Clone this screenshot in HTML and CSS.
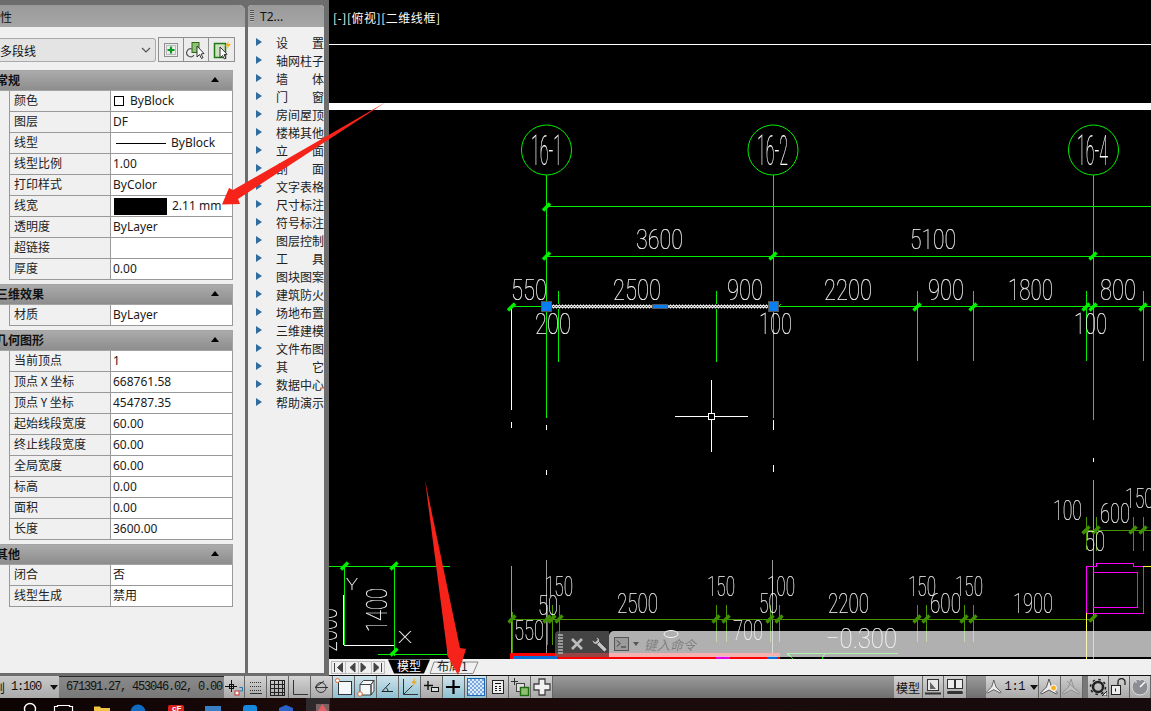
FILE: index.html
```html
<!DOCTYPE html>
<html lang="zh">
<head>
<meta charset="utf-8">
<title>CAD</title>
<link rel="stylesheet" href="styles.css">
</head>
<body>
<div class="main">
  <section class="props">
    <div class="titlebar props-title"><span class="clip-title">特性</span></div>
    <div class="selector">
      <div class="combo"><span>多段线</span>
        <svg class="chev" width="10" height="6" viewBox="0 0 10 6"><path d="M1 1l4 4 4-4" fill="none" stroke="#555" stroke-width="1.2"/></svg>
      </div>
      <div class="combo-btns">
        <button class="tool"><svg width="18" height="18" viewBox="0 0 18 18"><rect x="2.5" y="2.5" width="13" height="13" fill="none" stroke="#333" stroke-dasharray="1 1"/><rect x="4.5" y="4.5" width="9" height="9" fill="none" stroke="#888" stroke-dasharray="1 1"/><path d="M9 5.5v7M5.500 9h7" stroke="#0a9a20" stroke-width="2.2"/></svg></button>
        <button class="tool"><svg width="20" height="20" viewBox="0 0 20 20"><rect x="6" y="2.500" width="7" height="10" fill="#8fc17a" stroke="#2d6b12"/><path d="M6 9a4 4 0 1 0 2 6" fill="none" stroke="#555" stroke-width="1.200"/><path d="M11 6v11l2.500-2.500 2 4 1.500-.8-2-3.700 3-.5z" fill="#fff" stroke="#333"/></svg></button>
        <button class="tool"><svg width="20" height="20" viewBox="0 0 20 20"><rect x="2.500" y="3.500" width="11" height="14" fill="#cfe0c4" stroke="#1f7a14" stroke-width="1.500"/><path d="M8 7v11l2.500-2.500 2 3.500 1.500-.8-2-3.500 3-.5z" fill="#fff" stroke="#333"/><path d="M17 1l-4 5h3l-2 4 5-6h-3z" fill="#f5b21e"/></svg></button>
      </div>
    </div>

    <div class="sec">
      <h3 class="sec-head"><span>常规</span><i class="caret"></i></h3>
      <div class="row"><div class="k">颜色</div><div class="v"><i class="swatch"></i>ByBlock</div></div>
      <div class="row"><div class="k">图层</div><div class="v">DF</div></div>
      <div class="row"><div class="k">线型</div><div class="v"><i class="ltype"></i>ByBlock</div></div>
      <div class="row"><div class="k">线型比例</div><div class="v">1.00</div></div>
      <div class="row"><div class="k">打印样式</div><div class="v">ByColor</div></div>
      <div class="row"><div class="k">线宽</div><div class="v"><i class="lweight"></i>2.11 mm</div></div>
      <div class="row"><div class="k">透明度</div><div class="v">ByLayer</div></div>
      <div class="row"><div class="k">超链接</div><div class="v"></div></div>
      <div class="row"><div class="k">厚度</div><div class="v">0.00</div></div>
    </div>
    <div class="sec">
      <h3 class="sec-head"><span>三维效果</span><i class="caret"></i></h3>
      <div class="row"><div class="k">材质</div><div class="v">ByLayer</div></div>
    </div>
    <div class="sec">
      <h3 class="sec-head"><span>几何图形</span><i class="caret"></i></h3>
      <div class="row"><div class="k">当前顶点</div><div class="v">1</div></div>
      <div class="row"><div class="k">顶点 X 坐标</div><div class="v">668761.58</div></div>
      <div class="row"><div class="k">顶点 Y 坐标</div><div class="v">454787.35</div></div>
      <div class="row"><div class="k">起始线段宽度</div><div class="v">60.00</div></div>
      <div class="row"><div class="k">终止线段宽度</div><div class="v">60.00</div></div>
      <div class="row"><div class="k">全局宽度</div><div class="v">60.00</div></div>
      <div class="row"><div class="k">标高</div><div class="v">0.00</div></div>
      <div class="row"><div class="k">面积</div><div class="v">0.00</div></div>
      <div class="row"><div class="k">长度</div><div class="v">3600.00</div></div>
    </div>
    <div class="sec">
      <h3 class="sec-head"><span>其他</span><i class="caret"></i></h3>
      <div class="row"><div class="k">闭合</div><div class="v">否</div></div>
      <div class="row"><div class="k">线型生成</div><div class="v">禁用</div></div>
    </div>
  </section>

  <section class="palette">
    <div class="titlebar pal-title"><i class="grip"></i><span>T2...</span></div>
    <ul class="pal-list">
      <li>设　　置</li><li>轴网柱子</li><li>墙　　体</li><li>门　　窗</li><li>房间屋顶</li><li>楼梯其他</li><li>立　　面</li>
      <li>剖　　面</li><li>文字表格</li><li>尺寸标注</li><li>符号标注</li><li>图层控制</li><li>工　　具</li><li>图块图案</li>
      <li>建筑防火</li><li>场地布置</li><li>三维建模</li><li>文件布图</li><li>其　　它</li><li>数据中心</li><li>帮助演示</li>
    </ul>
  </section>

  <section class="viewport">
    <svg class="cad" width="822" height="659" viewBox="329 0 822 659">
      <defs>
        <path id="tk" d="M-3.500 3.500L3.500-3.500"/>
        <pattern id="zz" width="3" height="5" patternUnits="userSpaceOnUse" x="552" y="304"><path d="M0 2.500L1.500 1L3 2.500L1.500 4z" fill="none" stroke="#fff" stroke-width="1.200"/></pattern>
      </defs>
      <g class="label-wrap"><text class="vp-label" x="333" y="23" textLength="107">[-][俯视][二维线框]</text></g>
      <g class="crisp">
        <path class="wl" d="M329 44.500H1151"/>
        <rect x="329" y="103" width="822" height="7" fill="#fff"/>
        <path class="gl" d="M546.500 175V418M773.500 175V418M1093.500 175V420M546 206.500H1151M546 256.500H1151M510 306.500H1151M558.500 291V362M716.500 291V362M917.500 291V361M973.500 291V361M1086.500 291V361M1143.500 291V361"/>
        <path class="wl" d="M511.500 306V410M511.500 422V428M546.500 425V430M546.500 470V475M773.500 420V430M773.500 465V472M1093.500 458V462"/>
        <path class="grey" d="M511.500 566V659M546.500 560V659M772.500 560V659M1093.500 480V659"/>
        <path class="dg" d="M512 619.500H1093M512.500 612V655M547.500 605V645M552.500 605V645M559.500 605V645M716.500 605V642M726.500 605V642M770.500 605V642M779.500 605V642M917.500 605V642M926.500 605V642M964.500 605V642M973.500 605V642M1083 530.500H1151M1086.500 517V550M1096.500 517V551M1133.500 517V551M1143.500 517V551"/>
        <path class="mg" d="M1086.500 613V566.500H1096.500V563.500H1133.500V566.500H1143.500V613H1086.500M1093 572.500H1137.500V607.500H1093"/>
        <path class="yl" d="M1086.500 613V659M1143 566.500H1151"/>
        <path class="gl" d="M329 566.500H450M344.500 566V645M394.500 566V656M378 654.500H450"/>
        <path class="wl" d="M343.500 595V645M344 645.500H394"/>
        <path class="wl" d="M675 416.500H748M711.500 380V452"/>
        <rect x="708.500" y="413.500" width="6" height="6" fill="#000" stroke="#fff"/>
        <rect x="510" y="653" width="270" height="6" fill="#f00"/>
        <rect x="513" y="656" width="44" height="3" fill="#0a6ed8"/>
        <rect x="716" y="656" width="14" height="3" fill="#e000e0"/>
        <rect x="767" y="656" width="10" height="3" fill="#0a6ed8"/>
        <path class="gl" d="M787 653.500H898M787 653.500L793 659M822 659L825 653.500"/>
      </g>
      <circle class="cg" cx="546.500" cy="150" r="25"/>
      <circle class="cg" cx="773" cy="150" r="25"/>
      <circle class="cg" cx="1093.500" cy="150" r="25"/>
      <ellipse cx="671" cy="634" rx="7" ry="3.500" fill="none" stroke="#fff"/>
      <g class="tg">
        <use href="#tk" x="546.500" y="207"/><use href="#tk" x="546.500" y="256"/><use href="#tk" x="773" y="256"/><use href="#tk" x="1093" y="256"/>
        <use href="#tk" x="511.500" y="307"/><use href="#tk" x="917" y="307"/><use href="#tk" x="973" y="307"/><use href="#tk" x="1086" y="307"/><use href="#tk" x="1093" y="307"/><use href="#tk" x="1143" y="307"/>
        <use href="#tk" x="344.500" y="566"/><use href="#tk" x="394" y="566"/><use href="#tk" x="394" y="652"/>
      </g>
      <path class="small-tk" d="M558 307l3-3M716 307l3-3M713 309l3-3M778 307l3-3"/>
      <g class="td">
        <use href="#tk" x="512" y="619"/><use href="#tk" x="547" y="619"/><use href="#tk" x="552" y="619"/><use href="#tk" x="559" y="619"/><use href="#tk" x="716" y="619"/><use href="#tk" x="726" y="619"/>
        <use href="#tk" x="770" y="619"/><use href="#tk" x="779" y="619"/><use href="#tk" x="917" y="619"/><use href="#tk" x="926" y="619"/><use href="#tk" x="964" y="619"/><use href="#tk" x="973" y="619"/><use href="#tk" x="1093" y="618"/>
        <use href="#tk" x="1086" y="530"/><use href="#tk" x="1096" y="530"/><use href="#tk" x="1133" y="530"/><use href="#tk" x="1143" y="530"/>
      </g>
      <rect x="552" y="304" width="216" height="5" fill="#000"/>
      <rect x="552" y="304" width="216" height="5" fill="url(#zz)"/>
      <g class="crisp">
        <rect class="grip-h" x="541" y="301" width="10" height="10"/>
        <rect class="grip-h" x="768" y="301" width="10" height="10"/>
        <rect class="grip-h" x="652.500" y="304.500" width="15" height="4"/>
      </g>
      <g class="dim">
        <text class="bub" x="531" y="165" textLength="31" lengthAdjust="spacingAndGlyphs">16-1</text>
        <text class="bub" x="757" y="165" textLength="31" lengthAdjust="spacingAndGlyphs">16-2</text>
        <text class="bub" x="1077" y="165" textLength="31" lengthAdjust="spacingAndGlyphs">16-4</text>
        <text class="mid" x="636" y="249" textLength="47" lengthAdjust="spacingAndGlyphs">3600</text>
        <text class="mid" x="910" y="249" textLength="46" lengthAdjust="spacingAndGlyphs">5100</text>
        <text x="511" y="300" textLength="36" lengthAdjust="spacingAndGlyphs">550</text>
        <text x="613" y="300" textLength="48" lengthAdjust="spacingAndGlyphs">2500</text>
        <text x="727" y="300" textLength="36" lengthAdjust="spacingAndGlyphs">900</text>
        <text x="824" y="300" textLength="48" lengthAdjust="spacingAndGlyphs">2200</text>
        <text x="928" y="300" textLength="36" lengthAdjust="spacingAndGlyphs">900</text>
        <text x="1008" y="300" textLength="45" lengthAdjust="spacingAndGlyphs">1800</text>
        <text x="1100" y="300" textLength="36" lengthAdjust="spacingAndGlyphs">800</text>
        <text x="535" y="334" textLength="36" lengthAdjust="spacingAndGlyphs">200</text>
        <text x="759" y="334" textLength="33" lengthAdjust="spacingAndGlyphs">100</text>
        <text x="1074" y="334" textLength="33" lengthAdjust="spacingAndGlyphs">100</text>
        <text class="low" x="1053" y="520" textLength="29" lengthAdjust="spacingAndGlyphs">100</text>
        <text class="low" x="1100" y="523" textLength="30" lengthAdjust="spacingAndGlyphs">600</text>
        <text class="low" x="1125" y="508" textLength="29" lengthAdjust="spacingAndGlyphs">150</text>
        <text class="low" x="1085" y="551" textLength="20" lengthAdjust="spacingAndGlyphs">50</text>
        <text class="low" x="545" y="596" textLength="28" lengthAdjust="spacingAndGlyphs">150</text>
        <text class="low" x="538" y="615" textLength="20" lengthAdjust="spacingAndGlyphs">50</text>
        <text class="low" x="617" y="613" textLength="41" lengthAdjust="spacingAndGlyphs">2500</text>
        <text class="low" x="707" y="596" textLength="28" lengthAdjust="spacingAndGlyphs">150</text>
        <text class="low" x="514" y="640" textLength="30" lengthAdjust="spacingAndGlyphs">550</text>
        <text class="low" x="733" y="640" textLength="30" lengthAdjust="spacingAndGlyphs">700</text>
        <text class="low" x="767" y="596" textLength="28" lengthAdjust="spacingAndGlyphs">100</text>
        <text class="low" x="759" y="613" textLength="19" lengthAdjust="spacingAndGlyphs">50</text>
        <text class="low" x="828" y="613" textLength="41" lengthAdjust="spacingAndGlyphs">2200</text>
        <text class="low" x="908" y="596" textLength="28" lengthAdjust="spacingAndGlyphs">150</text>
        <text class="low" x="930" y="613" textLength="31" lengthAdjust="spacingAndGlyphs">600</text>
        <text class="low" x="955" y="596" textLength="28" lengthAdjust="spacingAndGlyphs">150</text>
        <text class="low" x="1013" y="613" textLength="40" lengthAdjust="spacingAndGlyphs">1900</text>
        <text class="low" x="826" y="648" textLength="71" lengthAdjust="spacingAndGlyphs">−0.300</text>
        <text transform="translate(387 632) rotate(-90)" textLength="44" lengthAdjust="spacingAndGlyphs">1400</text>
        <text transform="translate(337 652) rotate(-90)" textLength="44" lengthAdjust="spacingAndGlyphs">2000</text>
        <text class="axis" x="346" y="590" textLength="12" lengthAdjust="spacingAndGlyphs">Y</text>
        <text class="axis" x="398" y="643" textLength="14" lengthAdjust="spacingAndGlyphs">X</text>
      </g>
    </svg>

    <div class="cmd">
      <div class="cmd-tools">
        <i class="cmd-grip"></i>
        <svg width="16" height="16" viewBox="0 0 16 16"><path d="M3 3l10 10M13 3L3 13" stroke="#bcbcbc" stroke-width="2.600"/></svg>
        <svg width="17" height="17" viewBox="0 0 17 17"><path d="M6.500 6.500L14.500 14.500" stroke="#333" stroke-width="5"/><path d="M6.500 6.500L14.500 14.500" stroke="#c6c6c6" stroke-width="3.400"/><path d="M1.500 3.500L4 6l2.500-2L4.500 1.500C7.500 1 9 3 8.500 5.500L6 8C3.500 9 1 6.500 1.500 3.500z" fill="#c6c6c6" stroke="#333" stroke-width=".7"/></svg>
      </div>
      <div class="cmd-input">
        <svg width="15" height="14" viewBox="0 0 15 14"><rect x=".5" y=".5" width="14" height="13" fill="#9b9b9b" stroke="#555"/><path d="M3 3.500l3 3-3 3M7 10h5" fill="none" stroke="#333"/></svg>
        <i class="cmd-drop"></i>
        <span>键入命令</span>
      </div>
    </div>

    <div class="tabs">
      <svg width="822" height="16" viewBox="329 659 822 16">
        <path class="nav-box" d="M331.500 661.500H385M331.500 673.500H385M331.500 661v13M345.500 661v13M358.500 661v13M371.500 661v13M384.500 661v13"/>
        <g class="nav">
          <path d="M334.500 663v9M342.500 663l-5 4.500 5 4.500z"/><path d="M355 663l-5 4.500 5 4.500z"/><path d="M361 663l5 4.500-5 4.500z"/><path d="M374 663l5 4.500-5 4.500zM381.500 663v9"/>
        </g>
        <path d="M388 659.500L394 673.500H424L430 659.500z" fill="#000"/>
        <path d="M430 673.500L434 662H478L473 673.500z" fill="none" stroke="#888"/>
        <text class="tab-on" x="397" y="671">模型</text>
        <text class="tab-off" x="437" y="671">布局1</text>
      </svg>
    </div>
  </section>
</div>

<footer class="status">
  <div class="st-left"><span class="st-cut">则</span><span class="st-scale">1:100</span><i class="drop"></i></div>
  <div class="coords">671391.27, 453046.02, 0.00</div>
  <div class="st-btn w21"><svg width="18" height="18" viewBox="0 0 18 18"><path d="M0 8.500h12M6.500 2v12" stroke="#111"/><rect x="4.500" y="6.500" width="4" height="4" fill="none" stroke="#111"/><rect x="10" y="13" width="4" height="4" fill="#fff" stroke="#c33"/><path d="M14.500 9.500h3V13h-3" fill="none" stroke="#27a"/></svg></div>
  <div class="st-btn w22"><svg width="16" height="16" viewBox="0 0 16 16"><path d="M2 3.500h12M2 7.500h12M2 11.500h12" stroke="#333" stroke-dasharray="1 1"/><path d="M2 14.500h12" stroke="#333"/></svg></div>
  <div class="st-btn w22"><svg width="17" height="17" viewBox="0 0 17 17"><path d="M1 1.500h15M1 5.500h15M1 9.500h15M1 13.500h15M1 16.500h15M1.500 1v16M5.500 1v16M9.500 1v16M13.500 1v16M15.500 1v16" stroke="#222"/></svg></div>
  <div class="st-btn w22"><svg width="17" height="17" viewBox="0 0 17 17"><path d="M2.500 1v14.500H17" fill="none" stroke="#333"/></svg></div>
  <div class="st-btn w22"><svg width="18" height="18" viewBox="0 0 18 18"><path d="M15 9.500H2L11 3" fill="none" stroke="#333"/><circle cx="8" cy="9.500" r="5" fill="none" stroke="#333"/></svg></div>
  <div class="st-btn on w22"><svg width="20" height="20" viewBox="0 0 20 20"><rect x="4.500" y="4.500" width="13" height="13" fill="#f4f8fa" stroke="#333"/><circle cx="3.500" cy="3.500" r="2" fill="#fff" stroke="#e0662a"/></svg></div>
  <div class="st-btn on w22"><svg width="20" height="20" viewBox="0 0 20 20"><path d="M4 7.500L7.500 3.500H18L15 7.500zM15 7.500L18 3.500V14L15 18zM4 7.500h11V18H4z" fill="#f4f8fa" stroke="#444"/><circle cx="4" cy="17" r="2.300" fill="#fff" stroke="#e0662a"/></svg></div>
  <div class="st-btn on w22"><svg width="18" height="18" viewBox="0 0 18 18"><path d="M14 13.500H3L11 5" fill="none" stroke="#222"/><path d="M7 9.500a5 5 0 0 1 2 4" fill="none" stroke="#222"/></svg></div>
  <div class="st-btn on w22"><svg width="20" height="20" viewBox="0 0 20 20"><path d="M3.500 2v15.500H18M3.500 17.500l9-9" fill="none" stroke="#333"/><path d="M15 1l-3.500 5H14l-2 4 5-5.500h-2.500z" fill="#f2a51a"/></svg></div>
  <div class="st-btn w22"><svg width="18" height="18" viewBox="0 0 18 18"><path d="M1 7.500h9M5 3v9" stroke="#111" stroke-width="1.400"/><rect x="8.500" y="9.500" width="7" height="4" fill="#ddd" stroke="#111"/></svg></div>
  <div class="st-btn on w22"><svg width="16" height="16" viewBox="0 0 16 16"><path d="M0 8h14M7.500 1v14" stroke="#000" stroke-width="2.200"/></svg></div>
  <div class="st-btn on w22 qp"><i class="hatch"></i></div>
  <div class="st-btn w22"><svg width="14" height="14" viewBox="0 0 14 14"><rect x="1.500" y=".5" width="11" height="13" fill="#eee" stroke="#222"/><path d="M4 3.500h6M4 6.500h2M8 6.500h2M4 8.500h2M8 8.500h2M4 10.500h2M8 10.500h2" stroke="#111"/></svg></div>
  <div class="st-btn w22"><svg width="20" height="20" viewBox="0 0 20 20"><path d="M1 4.500h7M4.500 1v7" stroke="#333"/><rect x="6.500" y="6.500" width="8" height="8" fill="#ddd" stroke="#444"/><rect x="10.500" y="10.500" width="8" height="8" fill="#8cc070" stroke="#1f6a10" stroke-width="1.400"/></svg></div>
  <div class="st-btn w22"><svg width="20" height="20" viewBox="0 0 20 20"><path d="M7 2h6v5h5v6h-5v5H7v-5H2V7h5z" fill="#f2f2f2" stroke="#444" stroke-width="1.300"/></svg></div>
  <div class="st-spacer"></div>
  <div class="st-btn model">模型</div>
  <div class="st-btn w21"><svg width="18" height="16" viewBox="0 0 18 16"><rect x="3.500" y=".5" width="11" height="11" fill="#e8e8e8" stroke="#333"/><path d="M6 3v7h6z" fill="#666"/><path d="M1 14.500h16" stroke="#333" stroke-width="2"/></svg></div>
  <div class="st-btn win"><svg width="18" height="16" viewBox="0 0 18 16"><rect x="1.500" y=".5" width="7" height="9" fill="#eee" stroke="#333"/><rect x="9.500" y=".5" width="7" height="9" fill="#eee" stroke="#333"/><rect x="1" y="12" width="16" height="3" rx="1.500" fill="#333"/></svg></div>
  <div class="st-gap"></div>
  <div class="st-btn anno"><svg class="ai" width="18" height="16" viewBox="0 0 18 16"><path d="M9 0l2.500 8 6 6-1 1-7.500-4-7.500 4-1-1 6-6z" fill="#eee" stroke="#333" stroke-width=".8"/></svg><span>1:1</span><i class="drop"></i></div>
  <div class="st-btn w22"><svg width="20" height="18" viewBox="0 0 20 18"><path d="M9 1l2.500 8 6 6-1 1-7.500-4-7.500 4-1-1 6-6z" fill="#eee" stroke="#333" stroke-width=".8"/><circle cx="13.500" cy="10" r="3" fill="#f5b21e" stroke="#fff"/></svg></div>
  <div class="st-btn w22 dim-btn"><svg width="20" height="18" viewBox="0 0 20 18"><path d="M9 1l2.500 8 6 6-1 1-7.500-4-7.500 4-1-1 6-6z" fill="#c8c8c8" stroke="#888" stroke-width=".8"/><path d="M5 3l10 10" stroke="#999"/></svg></div>
  <div class="st-gap small"></div>
  <div class="st-btn w21"><svg width="18" height="18" viewBox="0 0 18 18"><circle cx="9" cy="9" r="5" fill="none" stroke="#222" stroke-width="2.500"/><circle cx="9" cy="9" r="7.500" fill="none" stroke="#222" stroke-width="1.600" stroke-dasharray="2.500 3.400"/><path d="M18 13v5h-5z" fill="#eee" stroke="#222"/></svg></div>
  <div class="st-btn w21"><svg width="18" height="18" viewBox="0 0 18 18"><rect x="1.500" y="7.500" width="9" height="9" fill="#eee" stroke="#222"/><path d="M5.500 10.500v3" stroke="#222"/><path d="M8 7V4a3.500 3.500 0 0 1 7 0v3" fill="none" stroke="#222" stroke-width="1.300"/></svg></div>
  <div class="st-btn grow"><svg width="18" height="18" viewBox="0 0 18 18"><circle cx="9" cy="9" r="8" fill="#8c8c94" stroke="#ddd"/><path d="M9 9l5-5" stroke="#fff" stroke-width="1.500"/><path d="M4 4h2M8 2h2" stroke="#eee"/></svg></div>
</footer>

<div class="taskbar">
  <svg width="330" height="13" viewBox="0 698 330 13">
    <rect x="306" y="698" width="24" height="13" fill="#2e2a2c"/>
    <circle cx="30" cy="709" r="5.500" fill="none" stroke="#fff" stroke-width="1.400"/>
    <path d="M54.500 712v-5.500h3v-1h12v1h3v5.500" fill="none" stroke="#fff" stroke-width="1.200"/>
    <path d="M94 712v-5.500h6l1 1.500h9v4z" fill="#f3c343"/>
    <circle cx="138" cy="712" r="7.500" fill="#0f6cc0"/>
    <rect x="168" y="705" width="16" height="10" rx="2" fill="#d8201c"/>
    <text x="172" y="711" class="tb-ic">cF</text>
    <rect x="205" y="706" width="16" height="8" fill="#3a7fc4"/>
    <rect x="243" y="705" width="14" height="9" rx="3" fill="#1688e0"/>
    <path d="M279 708l7-3 7 3v5h-14z" fill="#2a62c8"/>
    <path d="M322.500 704l6 9h-12z" fill="#d9222a"/>
    <rect x="316" y="704" width="13" height="8" fill="#f0b8b8" opacity=".4"/>
  </svg>
</div>

<svg class="arrows" width="1151" height="711" viewBox="0 0 1151 711">
  <path d="M386 102L233 190L229 188L222 204.500L240 204L238 199z" fill="#f5231a"/>
  <path d="M425 480L460 648L466 649L458 675L447 655L447 650z" fill="#f5231a"/>
</svg>
</body>
</html>
```
FILE: styles.css
```css
* { box-sizing: border-box; }
html, body { margin: 0; padding: 0; }
body {
  width: 1151px; height: 711px; overflow: hidden; position: relative;
  display: flex; flex-direction: column;
  background: #6d6d6d;
  font-family: "Noto Sans", "Noto Sans CJK SC", sans-serif;
  font-size: 12px; color: #111;
}
.main { height: 676px; display: flex; background: #6d6d6d; }

.titlebar { height: 22px; background: linear-gradient(#9a9a9a, #a6a6a6); display: flex; align-items: center; color: #111; }

/* properties */
.props {
  width: 245px; height: 668px; margin-top: 5px; background: #f0f0f0;
  border-top-right-radius: 6px; overflow: hidden;
}
.props-title { overflow: hidden; }
.clip-title { margin-left: -12px; font-family: "Noto Sans CJK SC", sans-serif; }
.selector { display: flex; padding: 11px 10px 0 0; height: 43px; justify-content: space-between; }
.combo {
  width: 156px; height: 24px; border: 1px solid #aaa; border-left: 0; border-radius: 0 3px 3px 0; background: #e4e4e4;
  display: flex; align-items: center; justify-content: space-between; padding-right: 4px;
  font-family: "Noto Sans CJK SC", sans-serif; font-size: 12px;
}
.combo-btns { display: flex; margin-top: -1px; border: 1px solid #8f8f8f; height: 25px; }
.tool {
  width: 25px; padding: 0; border: 0; border-right: 1px solid #8f8f8f; background: #ececec;
  display: flex; align-items: center; justify-content: center;
}
.tool:last-child { border-right: 0; }
.chev { flex: none; }

.sec { width: 233px; margin-bottom: 4px; }
.sec-head {
  margin: 0; height: 21px; padding: 0 13px 2px 0; display: flex; align-items: center; justify-content: space-between;
  background: linear-gradient(#ababab, #8d8d8d); border: 1px solid #a4a4a4; border-left: 0;
  font: bold 12px "Noto Sans CJK SC", sans-serif; color: #111; overflow: hidden;
}
.sec-head span { margin-left: -4px; }
.caret { width: 0; height: 0; border: 4px solid transparent; border-bottom: 5px solid #000; border-top: 0; }
.row {
  margin-left: 9px; height: 21px; display: flex;
  border: 1px solid #999; border-top: 0;
}
.k {
  width: 101px; flex: none; padding-left: 4px; border-right: 1px solid #999; background: #f0f0f0;
  line-height: 18px; font-family: "Noto Sans CJK SC", sans-serif; white-space: nowrap; color: #222;
}
.v {
  flex: 1; background: #fff; padding-left: 2px; line-height: 20px; display: flex; align-items: center; white-space: nowrap;
  font-family: "Noto Sans", "Noto Sans CJK SC", sans-serif; color: #1a1a1a;
}
.swatch { width: 10px; height: 10px; border: 1px solid #000; background: #fff; margin: 0 6px 0 1px; }
.ltype { width: 50px; height: 1px; background: #000; margin: 0 5px 0 3px; }
.lweight { width: 53px; height: 17px; background: #000; margin: 0 5px 0 1px; }

/* palette */
.palette {
  width: 76px; height: 668px; margin: 5px 5px 0 3px; background: #f0f0f0;
  border-radius: 4px 4px 0 0; overflow: hidden;
}
.pal-title { padding-left: 2px; gap: 6px; font-size: 12px; }
.grip { width: 4px; height: 12px; background: repeating-linear-gradient(#555 0 1px, #bbb 1px 2px); }
.pal-list { list-style: none; margin: 7px 0 0; padding: 0; }
.pal-list li {
  position: relative; height: 18px; line-height: 18px; padding-left: 28px; white-space: nowrap; overflow: hidden;
  font-family: "Noto Sans CJK SC", sans-serif; color: #222;
}
.pal-list li::before {
  content: ""; position: absolute; left: 8px; top: 4px; width: 0; height: 0;
  border-left: 6px solid #2f6c9f; border-top: 4.5px solid transparent; border-bottom: 4.5px solid transparent;
}

/* viewport */
.viewport { position: relative; width: 822px; height: 676px; background: #000; }
.cad { display: block; background: #000; }
.crisp { shape-rendering: crispEdges; }
.label-wrap { opacity: .99; }
.vp-label { font: 12px "Noto Sans CJK SC", sans-serif; fill: #fff; }
.wl { stroke: #fff; fill: none; }
.gl { stroke: #00f000; fill: none; }
.dg { stroke: #4a9600; fill: none; }
.grey { stroke: #9a9a9a; fill: none; }
.mg { stroke: #ff00ff; fill: none; }
.yl { stroke: #ffff33; fill: none; }
.cg { stroke: #00f000; fill: none; }
.tg { stroke: #00f000; stroke-width: 3.400; }
.td { stroke: #3f8f00; stroke-width: 3.400; }
.small-tk { stroke: #00f000; fill: none; }
.grip-h { fill: #0a7df0; stroke: #555; }
.dim { opacity: .99; }
.dim text {
  font-family: Roboto, "Liberation Sans", sans-serif; font-weight: 100; font-size: 29px;
  fill: #fff; stroke: #fff; stroke-width: .15;
}
.dim .bub { font-size: 42px; stroke-width: .2; }
.dim .mid { font-size: 27px; }
.dim .low { font-size: 28px; }
.dim .axis { font-size: 16px; }

.cmd { position: absolute; left: 226px; top: 631px; right: 0; height: 26px; display: flex; }
.cmd-tools {
  width: 54px; background: rgba(100, 100, 100, .68); display: flex; align-items: center; gap: 6px; padding-left: 3px;
  border-top-left-radius: 4px;
}
.cmd-grip { width: 5px; height: 20px; background: repeating-linear-gradient(#999 0 2px, transparent 2px 3px); }
.cmd-input {
  flex: 1; background: rgba(241, 241, 241, .73); display: flex; align-items: center; padding-left: 5px;
  border-top-left-radius: 5px;
}
.cmd-drop { width: 0; height: 0; margin: 0 5px 0 4px; border: 3.500px solid transparent; border-top: 4px solid #555; border-bottom: 0; }
.cmd-input span { font: italic 13px "Noto Sans CJK SC", sans-serif; color: #808080; letter-spacing: 0; }

.tabs { height: 17px; border-top: 0; background: #f0f0f0; border-bottom: 1px solid #111; }
.tabs svg { display: block; }
.nav { fill: #444; stroke: #444; }
.nav-box { stroke: #bdbdbd; fill: none; }
.tab-on { font: 12px "Noto Sans CJK SC", sans-serif; fill: #fff; letter-spacing: 0; }
.tab-off { font: 12px "Noto Sans CJK SC", sans-serif; fill: #222; }

/* status */
.status {
  height: 22px; display: flex; background: linear-gradient(#9b9b9b, #6e6e6e); overflow: hidden;
}
.st-left {
  width: 59px; flex: none; overflow: hidden; display: flex; align-items: center; gap: 4px;
  background: linear-gradient(#c9c9c9, #aaa);
}
.st-cut { margin-left: -7px; font-family: "Noto Sans CJK SC", sans-serif; }
.st-scale { font-family: "Liberation Mono", monospace; font-size: 12px; letter-spacing: -1.2px; margin-left: 2px; }
.st-left .drop { margin-left: 5px; }
.drop { width: 0; height: 0; border: 4px solid transparent; border-top: 5px solid #111; border-bottom: 0; margin-left: 2px; }
.coords {
  width: 165px; flex: none; padding-left: 7px; line-height: 21px; white-space: nowrap;
  background: linear-gradient(#8a8a8a, #787878); border-top: 1px solid #2a2a2a;
  font-family: "Liberation Mono", monospace; font-size: 12px; letter-spacing: -1.2px; color: #111;
}
.st-btn {
  flex: none; height: 22px; display: flex; align-items: center; justify-content: center;
  background: linear-gradient(#d4d4d4, #a9a9a9); border-right: 1px solid #666;
}
.st-btn.on { background: linear-gradient(#cfe3ea, #8cc0d2); }
.w21 { width: 21px; }
.w22 { width: 22px; }
.qp { background: #cfe3ea; }
.hatch {
  width: 18px; height: 18px; border: 1px solid #1a68b8;
  background: repeating-conic-gradient(#7aa7de 0 25%, #dbe8f6 0 50%) 0 0 / 4px 4px;
}
.st-spacer { flex: 1; }
.model { width: 29px; font: 12px "Noto Sans CJK SC", sans-serif; }
.win { width: 23px; }
.st-gap { width: 19px; flex: none; }
.st-gap.small { width: 5px; background: #777; }
.anno { width: 53px; gap: 3px; font-family: "Liberation Mono", monospace; letter-spacing: -.4px; }
.dim-btn { opacity: .9; }
.grow { width: 21px; }

.taskbar { flex: 1; background: linear-gradient(90deg, #0c0303, #1d0a0a 30%, #170b0d 100%); overflow: hidden; }
.taskbar svg { display: block; }
.tb-ic { font: bold 8px "Liberation Sans", sans-serif; fill: #fff; }

.arrows { position: absolute; left: 0; top: 0; pointer-events: none; }
```
